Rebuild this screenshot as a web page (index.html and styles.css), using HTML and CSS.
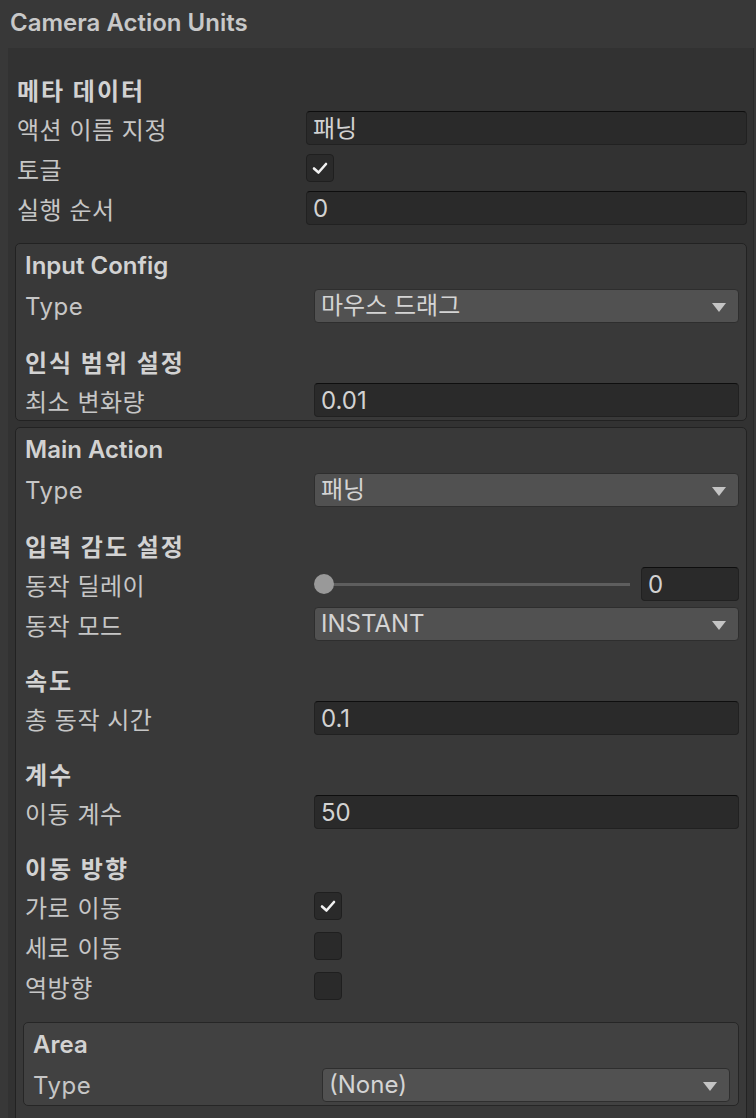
FILE: index.html
```html
<!DOCTYPE html>
<html lang="ko">
<head>
  <meta charset="UTF-8">
  <meta name="viewport" content="width=device-width, initial-scale=1.0">
  <title>Camera Action Units</title>
  <link rel="stylesheet" href="styles.css">
</head>
<body>
  <header class="title-bar">Camera Action Units</header>

  <div class="panel">
    <div class="heading">메타 데이터</div>
    <div class="row">
      <span class="label">액션 이름 지정</span>
      <div class="text-field">패닝</div>
    </div>
    <div class="row">
      <span class="label">토글</span>
      <div class="checkbox checked">
        <svg viewBox="0 0 20 20" width="20" height="20"><polyline points="4,10.5 8.5,14.5 16,6" /></svg>
      </div>
    </div>
    <div class="row">
      <span class="label">실행 순서</span>
      <div class="text-field">0</div>
    </div>

    <div class="box">
      <div class="box-title">Input Config</div>
      <div class="row">
        <span class="label">Type</span>
        <div class="dropdown">마우스 드래그<span class="arrow"></span></div>
      </div>
      <div class="heading">인식 범위 설정</div>
      <div class="row">
        <span class="label">최소 변화량</span>
        <div class="text-field">0.01</div>
      </div>
    </div>

    <div class="box main">
      <div class="box-title">Main Action</div>
      <div class="row">
        <span class="label">Type</span>
        <div class="dropdown">패닝<span class="arrow"></span></div>
      </div>

      <div class="heading">입력 감도 설정</div>
      <div class="row">
        <span class="label">동작 딜레이</span>
        <div class="slider-field">
          <div class="slider"><span class="knob"></span></div>
          <div class="text-field">0</div>
        </div>
      </div>
      <div class="row">
        <span class="label">동작 모드</span>
        <div class="dropdown">INSTANT<span class="arrow"></span></div>
      </div>

      <div class="heading">속도</div>
      <div class="row">
        <span class="label">총 동작 시간</span>
        <div class="text-field">0.1</div>
      </div>

      <div class="heading">계수</div>
      <div class="row">
        <span class="label">이동 계수</span>
        <div class="text-field">50</div>
      </div>

      <div class="heading">이동 방향</div>
      <div class="row">
        <span class="label">가로 이동</span>
        <div class="checkbox checked">
          <svg viewBox="0 0 20 20" width="20" height="20"><polyline points="4,10.5 8.5,14.5 16,6" /></svg>
        </div>
      </div>
      <div class="row">
        <span class="label">세로 이동</span>
        <div class="checkbox"></div>
      </div>
      <div class="row">
        <span class="label">역방향</span>
        <div class="checkbox"></div>
      </div>

      <div class="box area">
        <div class="box-title">Area</div>
        <div class="row">
          <span class="label">Type</span>
          <div class="dropdown">(None)<span class="arrow"></span></div>
        </div>
      </div>
    </div>
  </div>
</body>
</html>
```

FILE: styles.css
```css
body {
  margin: 0;
  font-family: Inter, "Noto Sans CJK KR", sans-serif;
  font-size: 24px;
  background: #383838;
  color: #c6c6c6;
  height: 1118px;
  overflow: hidden;
}
.title-bar {
  height: 48px;
  line-height: 46px;
  padding-left: 10px;
  font-weight: 600;
  color: #c8c8c8;
}
.panel {
  margin-left: 8px;
  margin-right: 2px;
  min-height: 1070px;
  background: #323232;
  border-right: 1px solid #2a2a2a;
  padding: 28px 6px 0 9px;
}
.heading {
  height: 32px;
  line-height: 32px;
  font-weight: 700;
  letter-spacing: 2px;
  color: #d2d2d2;
  margin-top: 22px;
}
.panel > .heading:first-child {
  margin-top: 0;
}
.row {
  display: grid;
  grid-template-columns: 289px 1fr;
  align-items: center;
  height: 40px;
}
.label {
  white-space: nowrap;
  letter-spacing: 0.5px;
}
.text-field {
  height: 34px;
  line-height: 33px;
  box-sizing: border-box;
  padding-left: 6px;
  background: #2a2a2a;
  border: 1px solid #212121;
  border-top-color: #0e0e0e;
  border-radius: 4px;
  color: #d2d2d2;
}
.dropdown {
  position: relative;
  height: 34px;
  line-height: 32px;
  box-sizing: border-box;
  padding-left: 6px;
  background: #515151;
  border: 1px solid #2e2e2e;
  border-radius: 4px;
  color: #d4d4d4;
}
.arrow {
  position: absolute;
  right: 12px;
  top: 13px;
  width: 0;
  height: 0;
  border-left: 7px solid transparent;
  border-right: 7px solid transparent;
  border-top: 9px solid #c4c4c4;
}
.checkbox {
  width: 28px;
  height: 28px;
  box-sizing: border-box;
  background: #2a2a2a;
  border: 1px solid #1f1f1f;
  border-radius: 4px;
  display: flex;
  align-items: center;
  justify-content: center;
}
.checkbox svg {
  fill: none;
  stroke: #f2f2f2;
  stroke-width: 2.6;
  stroke-linecap: round;
  stroke-linejoin: round;
}
.slider-field {
  display: grid;
  grid-template-columns: 1fr 98px;
  gap: 11px;
  align-items: center;
}
.slider {
  position: relative;
  height: 3px;
  margin-left: 10px;
  background: #5e5e5e;
}
.knob {
  position: absolute;
  left: -10px;
  top: -9px;
  width: 20px;
  height: 20px;
  border-radius: 50%;
  background: #999999;
}
.box {
  margin-top: 15px;
  margin-left: -2px;
  background: #393939;
  border: 1px solid #222222;
  border-radius: 5px;
  padding: 2px 7px 0 9px;
}
.box-title {
  height: 40px;
  line-height: 40px;
  font-weight: 600;
  color: #d2d2d2;
}
.box.main {
  margin-top: 6px;
  padding-bottom: 20px;
}
.box.area {
  margin-top: 16px;
  margin-left: -2px;
  background: #414141;
  border-color: #262626;
  padding: 2px 8px 0 9px;
}
```
